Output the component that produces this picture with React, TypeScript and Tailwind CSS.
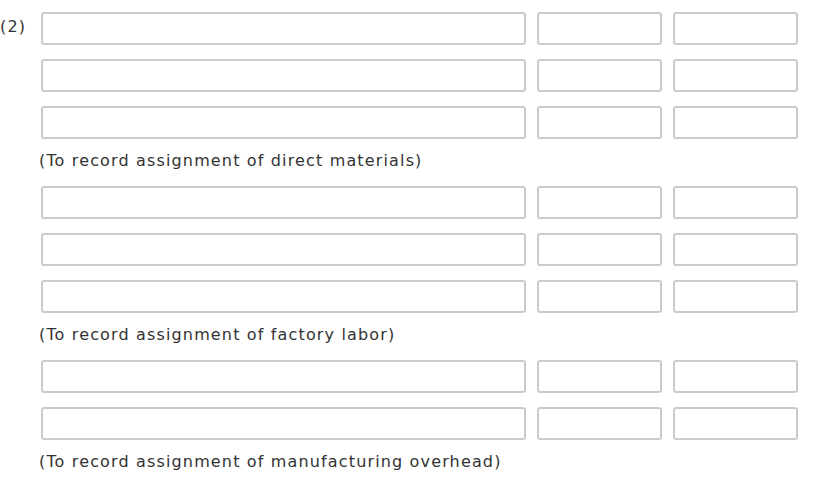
const groups = [
  { rows: 3, label: '(To record assignment of direct materials)' },
  { rows: 3, label: '(To record assignment of factory labor)' },
  { rows: 2, label: '(To record assignment of manufacturing overhead)' },
]

function Field({ width }: { width: string }) {
  return <input type="text" className={`${width} h-[33px] rounded-[3px] border-2 border-[#cbcbcb] bg-white outline-none`} />
}

function EntryRow() {
  return (
    <div className="flex gap-[11px]">
      <Field width="w-[485px]" />
      <Field width="w-[125px]" />
      <Field width="w-[125px]" />
    </div>
  )
}

export default function App() {
  return (
    <div className="w-[826px] h-[477px] bg-white text-[#333] text-[16px] tracking-[1.15px] flex pt-3" style={{ fontFamily: '"DejaVu Sans", Verdana, sans-serif' }}>
      <div className="w-[41px] pt-[3px] leading-[24px]">(2)</div>
      <div className="flex flex-col">
        {groups.map((g, gi) => (
          <div key={gi} className="flex flex-col">
            <div className="flex flex-col gap-[14px]">
              {Array.from({ length: g.rows }).map((_, i) => (
                <EntryRow key={i} />
              ))}
            </div>
            <div className="mt-[10px] mb-[13px] -ml-[2px] leading-[24px]">{g.label}</div>
          </div>
        ))}
      </div>
    </div>
  )
}
